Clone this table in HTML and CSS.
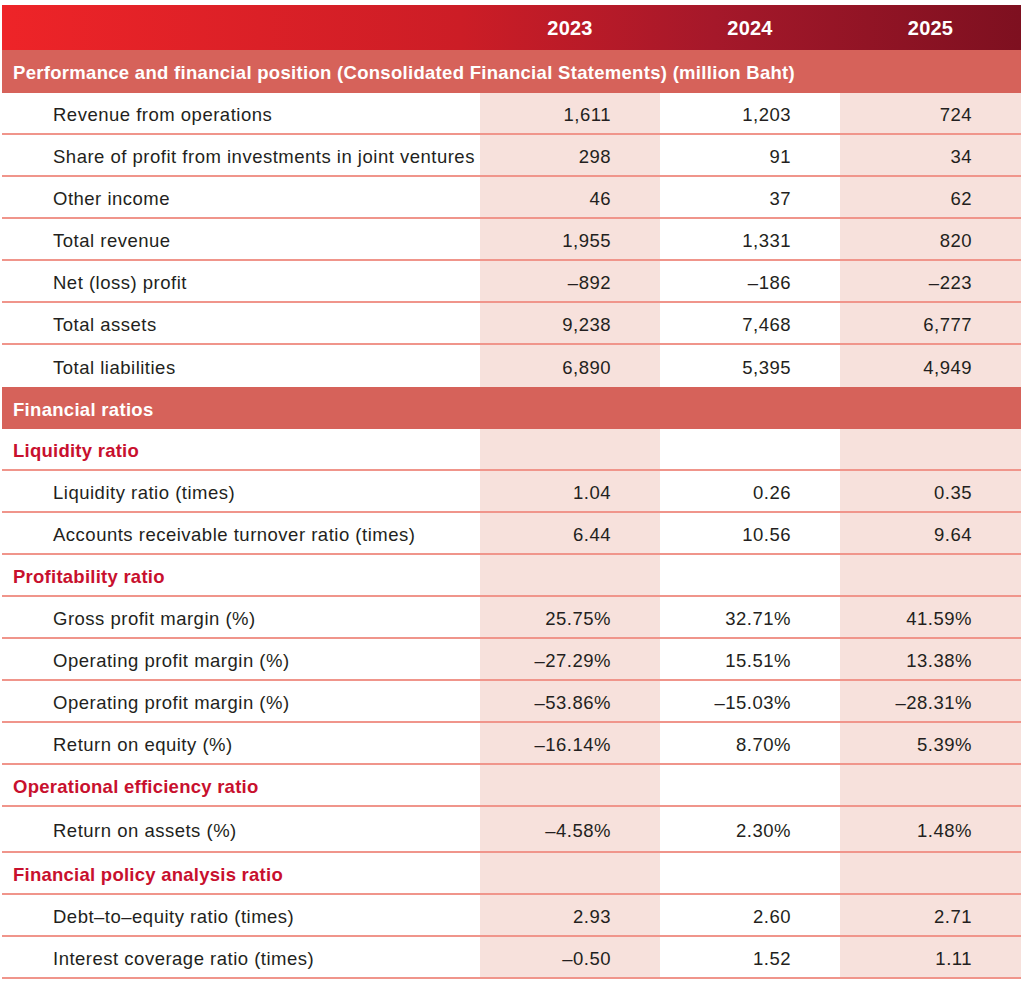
FILE: index.html
```html
<!DOCTYPE html>
<html lang="en">
<head>
<meta charset="utf-8">
<title>Financial highlights</title>
<link rel="stylesheet" href="styles.css">
</head>
<body>
<div class="table">
  <div class="row head">
    <div class="cell label"></div>
    <div class="cell num">2023</div>
    <div class="cell num">2024</div>
    <div class="cell num">2025</div>
  </div>
  <div class="row section first"><div class="cell label">Performance and financial position (Consolidated Financial Statements) (million Baht)</div></div>
  <div class="row data"><div class="cell label">Revenue from operations</div><div class="cell num shade">1,611</div><div class="cell num">1,203</div><div class="cell num shade">724</div></div>
  <div class="row data"><div class="cell label">Share of profit from investments in joint ventures</div><div class="cell num shade">298</div><div class="cell num">91</div><div class="cell num shade">34</div></div>
  <div class="row data"><div class="cell label">Other income</div><div class="cell num shade">46</div><div class="cell num">37</div><div class="cell num shade">62</div></div>
  <div class="row data"><div class="cell label">Total revenue</div><div class="cell num shade">1,955</div><div class="cell num">1,331</div><div class="cell num shade">820</div></div>
  <div class="row data"><div class="cell label">Net (loss) profit</div><div class="cell num shade">–892</div><div class="cell num">–186</div><div class="cell num shade">–223</div></div>
  <div class="row data"><div class="cell label">Total assets</div><div class="cell num shade">9,238</div><div class="cell num">7,468</div><div class="cell num shade">6,777</div></div>
  <div class="row data nob"><div class="cell label">Total liabilities</div><div class="cell num shade">6,890</div><div class="cell num">5,395</div><div class="cell num shade">4,949</div></div>
  <div class="row section"><div class="cell label">Financial ratios</div></div>
  <div class="row sub"><div class="cell label">Liquidity ratio</div><div class="cell num shade"></div><div class="cell num"></div><div class="cell num shade"></div></div>
  <div class="row data"><div class="cell label">Liquidity ratio (times)</div><div class="cell num shade">1.04</div><div class="cell num">0.26</div><div class="cell num shade">0.35</div></div>
  <div class="row data"><div class="cell label">Accounts receivable turnover ratio (times)</div><div class="cell num shade">6.44</div><div class="cell num">10.56</div><div class="cell num shade">9.64</div></div>
  <div class="row sub"><div class="cell label">Profitability ratio</div><div class="cell num shade"></div><div class="cell num"></div><div class="cell num shade"></div></div>
  <div class="row data"><div class="cell label">Gross profit margin (%)</div><div class="cell num shade">25.75%</div><div class="cell num">32.71%</div><div class="cell num shade">41.59%</div></div>
  <div class="row data"><div class="cell label">Operating profit margin (%)</div><div class="cell num shade">–27.29%</div><div class="cell num">15.51%</div><div class="cell num shade">13.38%</div></div>
  <div class="row data"><div class="cell label">Operating profit margin (%)</div><div class="cell num shade">–53.86%</div><div class="cell num">–15.03%</div><div class="cell num shade">–28.31%</div></div>
  <div class="row data"><div class="cell label">Return on equity (%)</div><div class="cell num shade">–16.14%</div><div class="cell num">8.70%</div><div class="cell num shade">5.39%</div></div>
  <div class="row sub"><div class="cell label">Operational efficiency ratio</div><div class="cell num shade"></div><div class="cell num"></div><div class="cell num shade"></div></div>
  <div class="row data tall"><div class="cell label">Return on assets (%)</div><div class="cell num shade">–4.58%</div><div class="cell num">2.30%</div><div class="cell num shade">1.48%</div></div>
  <div class="row sub"><div class="cell label">Financial policy analysis ratio</div><div class="cell num shade"></div><div class="cell num"></div><div class="cell num shade"></div></div>
  <div class="row data"><div class="cell label">Debt–to–equity ratio (times)</div><div class="cell num shade">2.93</div><div class="cell num">2.60</div><div class="cell num shade">2.71</div></div>
  <div class="row data"><div class="cell label">Interest coverage ratio (times)</div><div class="cell num shade">–0.50</div><div class="cell num">1.52</div><div class="cell num shade">1.11</div></div>
</div>
</body>
</html>
```
FILE: styles.css
```css
html, body {
  margin: 0;
  padding: 0;
  background: #ffffff;
}

body {
  font-family: "Liberation Sans", Arial, sans-serif;
  color: #231f20;
}

.table {
  margin: 5px 3px 0 2px;
  width: 1019px;
}

.row {
  display: grid;
  grid-template-columns: 478px 180px 180px 181px;
  height: 42px;
  box-sizing: border-box;
}

.cell {
  display: flex;
  align-items: center;
  box-sizing: border-box;
  padding-top: 3px;
  font-size: 18.5px;
  letter-spacing: 0.5px;
}

.num {
  justify-content: flex-end;
  padding-right: 49px;
}

.shade {
  background: #f7e1dc;
}

.head {
  height: 45px;
  background: linear-gradient(90deg, #ee2428 0%, #cc1d26 45%, #a5182a 70%, #7e1020 100%);
}

.head .num {
  justify-content: center;
  padding-right: 0;
  padding-top: 2px;
  color: #ffffff;
  font-weight: bold;
  font-size: 20px;
  letter-spacing: 0.2px;
}

.section {
  display: flex;
  height: 42px;
  background: #d6625a;
}

.section.first {
  height: 43px;
}

.section .label {
  color: #ffffff;
  font-weight: bold;
  padding-left: 11px;
  letter-spacing: 0.3px;
}

.data {
  border-bottom: 2px solid #f0958b;
}

.data.nob {
  border-bottom: none;
}

.data.tall {
  height: 46px;
}

.data .label {
  padding-left: 51px;
}

.sub {
  border-bottom: 2px solid #f0958b;
}

.sub .label {
  color: #c8102e;
  font-weight: bold;
  padding-left: 11px;
  letter-spacing: 0.25px;
}
```
